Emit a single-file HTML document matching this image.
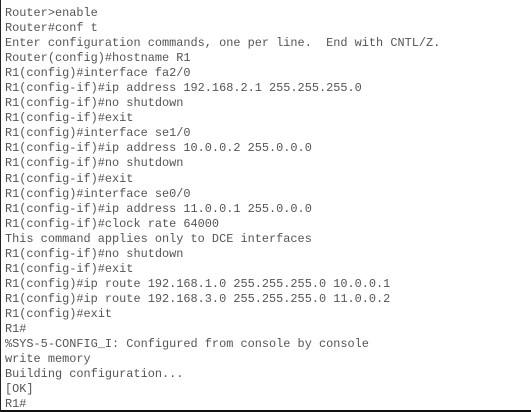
<!DOCTYPE html>
<html><head><style>
html,body{margin:0;padding:0;background:#fff;}
body{width:531px;height:412px;overflow:hidden;position:relative;}
.frame{position:absolute;left:0;top:0;width:530px;height:410px;border-left:1px solid #222;border-bottom:2px solid #111;box-sizing:content-box;}
pre{position:absolute;left:5px;top:6px;margin:0;font-family:"Liberation Mono",monospace;font-size:11.9px;line-height:15.05px;color:#555;}
</style></head><body>
<div class="frame"></div>
<pre>Router&gt;enable
Router#conf t
Enter configuration commands, one per line.  End with CNTL/Z.
Router(config)#hostname R1
R1(config)#interface fa2/0
R1(config-if)#ip address 192.168.2.1 255.255.255.0
R1(config-if)#no shutdown
R1(config-if)#exit
R1(config)#interface se1/0
R1(config-if)#ip address 10.0.0.2 255.0.0.0
R1(config-if)#no shutdown
R1(config-if)#exit
R1(config)#interface se0/0
R1(config-if)#ip address 11.0.0.1 255.0.0.0
R1(config-if)#clock rate 64000
This command applies only to DCE interfaces
R1(config-if)#no shutdown
R1(config-if)#exit
R1(config)#ip route 192.168.1.0 255.255.255.0 10.0.0.1
R1(config)#ip route 192.168.3.0 255.255.255.0 11.0.0.2
R1(config)#exit
R1#
%SYS-5-CONFIG_I: Configured from console by console
write memory
Building configuration...
[OK]
R1#</pre>
</body></html>
